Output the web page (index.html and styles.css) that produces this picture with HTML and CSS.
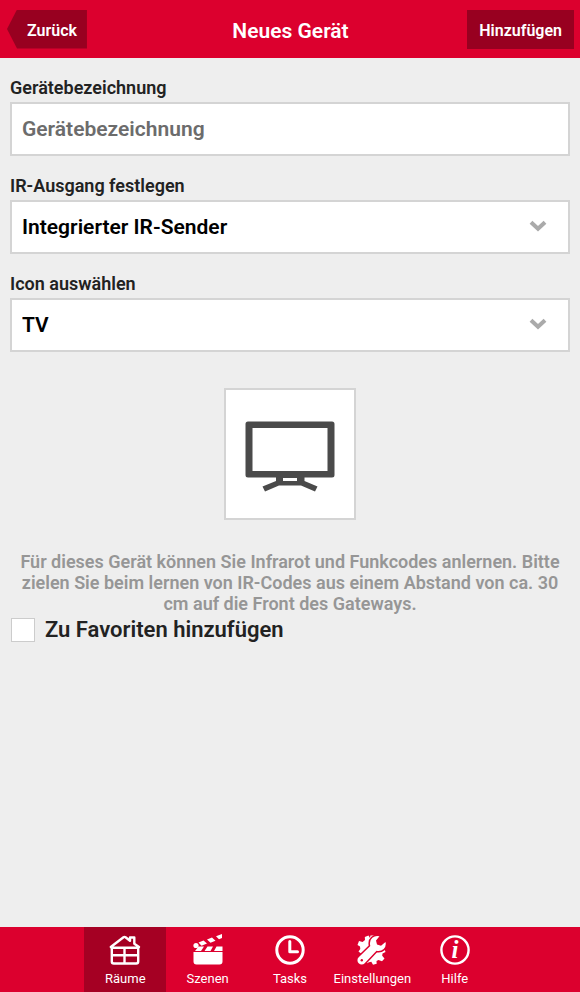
FILE: index.html
```html
<!DOCTYPE html>
<html lang="de">
<head>
<meta charset="utf-8">
<meta name="viewport" content="width=device-width, initial-scale=1">
<title>Neues Gerät</title>
<link rel="stylesheet" href="styles.css">
</head>
<body>
<header class="header">
  <button type="button" class="header-button back">Zurück</button>
  <h1 class="title">Neues Gerät</h1>
  <button type="submit" form="device" class="header-button add">Hinzufügen</button>
</header>
<main class="main">
  <form id="device" class="form">
    <div class="field">
      <label for="name">Gerätebezeichnung</label>
      <input class="control" id="name" type="text" placeholder="Gerätebezeichnung">
    </div>
    <div class="field">
      <label for="output">IR-Ausgang festlegen</label>
      <div class="select">
        <select class="control" id="output"><option>Integrierter IR-Sender</option></select>
        <svg class="chevron" viewBox="0 0 18 12" aria-hidden="true"><path d="M2 2.200l7 6.600 7-6.600"/></svg>
      </div>
    </div>
    <div class="field">
      <label for="icon">Icon auswählen</label>
      <div class="select">
        <select class="control" id="icon"><option>TV</option></select>
        <svg class="chevron" viewBox="0 0 18 12" aria-hidden="true"><path d="M2 2.200l7 6.600 7-6.600"/></svg>
      </div>
    </div>
    <div class="preview">
      <svg viewBox="0 0 90 72" aria-hidden="true">
        <path fill-rule="evenodd" d="M3 .5h84a2.500 2.500 0 0 1 2.500 2.500v51a2.500 2.500 0 0 1-2.500 2.500H59.500v3.500L72.500 65.500 70 70.500 56 64.500H34L20 70.500 17.500 65.500 31 60v-3.500H3A2.500 2.500 0 0 1 .5 54V3A2.500 2.500 0 0 1 3 .5zM7.500 7v43h75V7zM38 57v3h14v-3z"/>
      </svg>
    </div>
    <p class="hint">Für dieses Gerät können Sie Infrarot und Funkcodes anlernen. Bitte zielen Sie beim lernen von IR-Codes aus einem Abstand von ca. 30 cm auf die Front des Gateways.</p>
    <label class="favorite"><input type="checkbox">Zu Favoriten hinzufügen</label>
  </form>
</main>
<nav class="tabs">
  <a class="tab active" href="#raeume" aria-current="page">
    <svg viewBox="0 0 32 32" aria-hidden="true"><path class="line" d="M2.800 14v13.500q0 2 2 2h22.400q2 0 2-2V14M2.800 13.800h26.400M3 21.300h26M15.500 14v15M1.800 13L14.500 3.200Q15.500 2.500 16.500 3.200L21 6.800V3.500h4.300V9.800L30 13"/></svg>
    Räume
  </a>
  <a class="tab" href="#szenen">
    <svg viewBox="0 0 32 32" aria-hidden="true"><path d="M1.500 18h29v9.500a3 3 0 0 1-3 3h-23a3 3 0 0 1-3-3zM6.500 12.500H12L9 17H3zM15.500 12.500H21L18.500 17H12.500zM24.500 12.500H30.500v4.500H22zM6.500 8.500l5-1.900 3.500 3-5.500 2.200zM15 5.400L20 3.600l3.500 3.200-5 1.900zM24 2.300L30 0v4L27 5.300z"/><circle cx="4" cy="11.500" r="2.600"/></svg>
    Szenen
  </a>
  <a class="tab" href="#tasks">
    <svg viewBox="0 0 32 32" aria-hidden="true"><circle class="thick" cx="16" cy="16" r="13.200"/><path class="thick" d="M15.800 7.500v10.200H23.500"/></svg>
    Tasks
  </a>
  <a class="tab" href="#einstellungen">
    <svg viewBox="0 0 32 32" aria-hidden="true">
      <path d="M14.500 1.500h3.500l.5 3.500L7.500 18l-2.500 1.500-2.500-2 1.800-2.500-.3-2.500L1.500 11 3 7l3.600 1L9 6 8.800 3l3.700-1.500L14 4zM28.500 15l1 3-3 1.500-.3 2.200 2.300 2.800-2.500 2.800-3.500-1.300-2 1 .2 2.800-3.700 1-1.700-3-2.500.5-1.500 1L10 27l8-8.500 7-1z"/>
      <path class="cut" d="M2.700 29.300a4.200 4.200 0 0 1 0-6L14.300 12q-1.300-5.300 2-8.200Q19.500 1.200 23.500 2.300L20 6.500l1 4 4 1.200 4.500-3.700q1 4.200-1.800 7-3.200 2.800-7.200 1.800L8.700 29.300a4.200 4.200 0 0 1-6 0z"/>
      <circle class="hole" cx="5.800" cy="26.300" r="1.200"/>
    </svg>
    Einstellungen
  </a>
  <a class="tab" href="#hilfe">
    <svg viewBox="0 0 32 32" aria-hidden="true"><circle class="line" cx="16" cy="16" r="13.600"/><text class="info" x="16" y="24" text-anchor="middle">i</text></svg>
    Hilfe
  </a>
</nav>
</body>
</html>
```
FILE: styles.css
```css
* {
  box-sizing: border-box;
}

body {
  margin: 0;
  min-height: 100vh;
  display: flex;
  flex-direction: column;
  background: #eee;
  color: #222;
  font-family: Roboto, "Liberation Sans", sans-serif;
}

.header {
  display: grid;
  grid-template-columns: 1fr auto 1fr;
  align-items: center;
  height: 58px;
  padding: 0 6px 0 7px;
  background: #dc002e;
  color: #fff;
}

.title {
  margin: 0;
  padding-top: 4px;
  font-size: 21px;
  font-weight: 600;
  line-height: 24px;
}

.header-button {
  height: 39px;
  padding: 2px 12px 0;
  border: 0;
  background: #980020;
  color: #fff;
  font: 600 16px Roboto, "Liberation Sans", sans-serif;
}

.back {
  justify-self: start;
  padding: 2px 10px 0 20px;
  clip-path: polygon(0 50%, 10px 0, 100% 0, 100% 100%, 10px 100%);
}

.add {
  justify-self: end;
}

.main {
  flex: 1;
  padding: 20px 10px;
}

.form,
.field {
  display: flex;
  flex-direction: column;
}

.field {
  gap: 4px;
  margin-bottom: 20px;
  font-size: 18px;
  font-weight: 600;
  line-height: 20px;
}

.control {
  display: block;
  width: 100%;
  height: 54px;
  padding: 0 10px;
  border: 2px solid #d4d4d4;
  border-radius: 0;
  appearance: none;
  background: #fff;
  color: #000;
  font: 600 21px Roboto, "Liberation Sans", sans-serif;
}

.control::placeholder {
  color: #6c6c6c;
  opacity: 1;
}

.select {
  position: relative;
}

.chevron {
  position: absolute;
  top: 20px;
  right: 23px;
  width: 18px;
  height: 12px;
  fill: none;
  stroke: #aaa;
  stroke-width: 4;
  pointer-events: none;
}

.preview {
  display: grid;
  place-items: center;
  align-self: center;
  width: 132px;
  height: 132px;
  margin: 16px 0 31px;
  padding-top: 5px;
  border: 2px solid #d4d4d4;
  background: #fff;
}

.preview svg {
  width: 90px;
  height: 72px;
  fill: #4a4a4a;
}

.hint {
  margin: 0 0 4px;
  color: #969696;
  font-size: 18px;
  font-weight: 600;
  line-height: 21px;
  text-align: center;
}

.favorite {
  display: flex;
  align-items: center;
  align-self: flex-start;
  gap: 10px;
  font-size: 22px;
  font-weight: 600;
  line-height: 24px;
}

.favorite input {
  width: 24px;
  height: 24px;
  margin: 0 0 0 1px;
  border: 1px solid #ccc;
  appearance: none;
  background: #fff;
}

.favorite input:checked {
  background: #dc002e;
}

.tabs {
  display: flex;
  justify-content: center;
  height: 65px;
  background: #dc002e;
}

.tab {
  display: flex;
  flex-direction: column;
  align-items: center;
  flex: 0 1 14.2%;
  padding-top: 7px;
  color: #fff;
  font-size: 13px;
  line-height: 16px;
  text-decoration: none;
}

.active {
  background: #a50023;
}

.tab svg {
  width: 32px;
  height: 32px;
  margin-bottom: 5px;
  fill: #fff;
}

.tab .line,
.tab .thick {
  fill: none;
  stroke: #fff;
  stroke-width: 2.4;
  stroke-linejoin: round;
  stroke-linecap: round;
}

.tab .thick {
  stroke-width: 3;
}

.cut {
  stroke: #dc002e;
  stroke-width: 3;
  paint-order: stroke;
}

.hole {
  fill: #dc002e;
}

.info {
  font: italic bold 25px "Liberation Serif", serif;
}
```
